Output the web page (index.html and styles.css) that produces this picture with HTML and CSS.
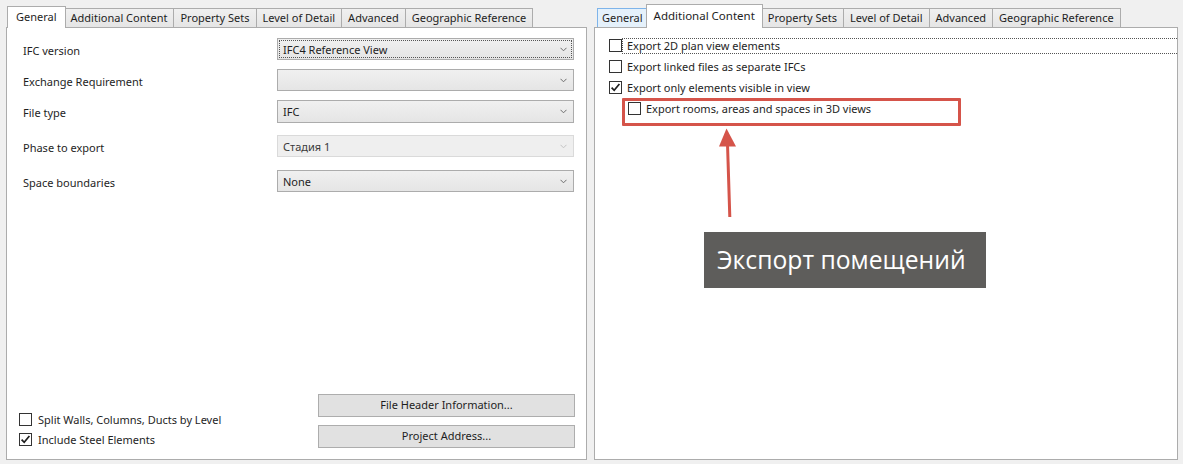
FILE: index.html
```html
<!DOCTYPE html>
<html lang="en">
<head>
    <meta charset="UTF-8">
    <title>IFC Export Setup</title>
    <link rel="stylesheet" href="styles.css">
</head>
<body>
    <!-- left dialog: General tab -->
    <section class="panel panelLeft">
        <div class="tabs">
            <div class="tab active">General</div>
            <div class="tab">Additional Content</div>
            <div class="tab">Property Sets</div>
            <div class="tab">Level of Detail</div>
            <div class="tab">Advanced</div>
            <div class="tab">Geographic Reference</div>
        </div>

        <div class="page generalPage">
            <div class="fields">
                <div class="fieldLabel">IFC version</div>
                <div class="combo focused">
                    <span>IFC4 Reference View</span>
                    <svg class="chev" width="7" height="5" viewBox="0 0 7 5"><path d="M0.5 0.8 L3.5 3.8 L6.5 0.8"/></svg>
                </div>

                <div class="fieldLabel">Exchange Requirement</div>
                <div class="combo">
                    <span></span>
                    <svg class="chev" width="7" height="5" viewBox="0 0 7 5"><path d="M0.5 0.8 L3.5 3.8 L6.5 0.8"/></svg>
                </div>

                <div class="fieldLabel">File type</div>
                <div class="combo tall">
                    <span>IFC</span>
                    <svg class="chev" width="7" height="5" viewBox="0 0 7 5"><path d="M0.5 0.8 L3.5 3.8 L6.5 0.8"/></svg>
                </div>

                <div class="fieldLabel">Phase to export</div>
                <div class="combo disabled">
                    <span>Стадия 1</span>
                    <svg class="chev" width="7" height="5" viewBox="0 0 7 5"><path d="M0.5 0.8 L3.5 3.8 L6.5 0.8"/></svg>
                </div>

                <div class="fieldLabel">Space boundaries</div>
                <div class="combo">
                    <span>None</span>
                    <svg class="chev" width="7" height="5" viewBox="0 0 7 5"><path d="M0.5 0.8 L3.5 3.8 L6.5 0.8"/></svg>
                </div>
            </div>

            <div class="bottomRow">
                <div class="checks">
                    <div class="check">
                        <span class="box"></span>
                        <span>Split Walls, Columns, Ducts by Level</span>
                    </div>
                    <div class="check">
                        <span class="box"><svg width="11" height="11" viewBox="0 0 11 11"><path d="M1.6 5.6 L4.2 8.3 L9.4 2"/></svg></span>
                        <span>Include Steel Elements</span>
                    </div>
                </div>
                <div class="buttons">
                    <div class="btn">File Header Information...</div>
                    <div class="btn">Project Address...</div>
                </div>
            </div>
        </div>
    </section>

    <!-- right dialog: Additional Content tab -->
    <section class="panel panelRight">
        <div class="tabs">
            <div class="tab hover">General</div>
            <div class="tab active">Additional Content</div>
            <div class="tab">Property Sets</div>
            <div class="tab">Level of Detail</div>
            <div class="tab">Advanced</div>
            <div class="tab">Geographic Reference</div>
        </div>

        <div class="page contentPage">
            <div class="option">
                <span class="box"></span>
                <span class="optText focusRect">Export 2D plan view elements</span>
            </div>
            <div class="option">
                <span class="box"></span>
                <span class="optText">Export linked files as separate IFCs</span>
            </div>
            <div class="option">
                <span class="box"><svg width="11" height="11" viewBox="0 0 11 11"><path d="M1.6 5.6 L4.2 8.3 L9.4 2"/></svg></span>
                <span class="optText">Export only elements visible in view</span>
            </div>
            <div class="option sub">
                <span class="box"></span>
                <span class="optText">Export rooms, areas and spaces in 3D views</span>
            </div>

            <div class="highlight"></div>
            <svg class="arrow" width="40" height="110" viewBox="0 0 40 110">
                <line x1="17.5" y1="24" x2="19.8" y2="97"/>
                <polygon points="16.5,8.5 9,26.5 26,26.5"/>
            </svg>
            <div class="callout">Экспорт помещений</div>
        </div>
    </section>
</body>
</html>
```

FILE: styles.css
```css
body{
    margin: 0;
    width: 1183px;
    height: 464px;
    background-color: #f0f0f0;
    display: flex;
    font-family: "Noto Sans", "Open Sans", sans-serif;
    font-size: 11px;
    color: #1e1e1e;
    overflow: hidden;
}
.panelLeft{
    margin-left: 6px;
    width: 581px;
}
.panelRight{
    margin-left: 7px;
    width: 584px;
}

/* tab strip */
.tabs{
    display: flex;
    align-items: flex-end;
    height: 27px;
    padding-left: 3px;
}
.tab{
    height: 19px;
    box-sizing: border-box;
    padding: 0 6px;
    line-height: 17px;
    border: 1px solid #acacac;
    border-bottom: none;
    margin-left: -1px;
    background: linear-gradient(#f0f0f0, #e5e5e5);
    white-space: nowrap;
}
.tab:first-child{
    margin-left: 0;
}
.tab.active{
    position: relative;
    z-index: 1;
    height: 22px;
    line-height: 19px;
    margin: 0 -2px -1px -2px;
    padding: 0 8px;
    background: #fff;
}
.tab.active + .tab{
    margin-left: 0;
}
.panelRight .tab.active{
    height: 24px;
    line-height: 21px;
    padding: 0 7px;
    font-size: 11.5px;
}
.tab.hover{
    padding: 0 4px;
    background: #e5f1fb;
    border-color: #7eb4ea;
    position: relative;
    z-index: 1;
}

.page{
    position: relative;
    box-sizing: border-box;
    height: 433px;
    border: 1px solid #acacac;
    background-color: #fff;
}

/* general page */
.generalPage{
    display: flex;
    flex-direction: column;
    padding: 10px 12px 10px 16px;
}
.fields{
    display: grid;
    grid-template-columns: 254px 297px;
    grid-template-rows: 31px 31px 35px 35px 22px;
}
.fieldLabel{
    height: 22px;
    display: flex;
    align-items: center;
    padding-top: 1px;
}
.combo{
    display: flex;
    align-items: center;
    justify-content: space-between;
    box-sizing: border-box;
    height: 22px;
    padding: 0 6px 0 5px;
    border: 1px solid #acacac;
    background: linear-gradient(#f0f0f0, #e5e5e5);
}
.combo.tall{
    height: 23px;
}
.combo.focused{
    outline: 1px dotted #555;
    outline-offset: -3px;
}
.combo.disabled{
    background: #efefef;
    border-color: #dadada;
    color: #3a3a3a;
}
.chev{
    flex: none;
}
.chev path{
    fill: none;
    stroke: #6d6d6d;
    stroke-width: 1;
}
.disabled .chev path{
    stroke: #c4c4c4;
}

.bottomRow{
    margin-top: auto;
    display: flex;
    justify-content: space-between;
    align-items: flex-end;
}
.checks{
    margin-left: -4px;
    margin-bottom: 3px;
    display: flex;
    flex-direction: column;
    gap: 6px;
}
.check{
    display: flex;
    align-items: center;
    gap: 6px;
    height: 14px;
}
.box{
    flex: none;
    width: 13px;
    height: 13px;
    box-sizing: border-box;
    border: 1px solid #333;
    background: #fff;
    display: flex;
    align-items: center;
    justify-content: center;
}
.box path{
    fill: none;
    stroke: #1e1e1e;
    stroke-width: 1.7;
}
.buttons{
    margin-right: -1px;
    margin-bottom: 1px;
    display: flex;
    flex-direction: column;
    gap: 8px;
}
.btn{
    width: 257px;
    height: 23px;
    box-sizing: border-box;
    border: 1px solid #adadad;
    background-color: #e1e1e1;
    text-align: center;
    line-height: 20px;
}

/* additional content page */
.contentPage{
    padding: 7px 0 0 14px;
}
.option{
    display: flex;
    align-items: center;
    height: 21px;
}
.option.sub{
    padding-left: 19px;
}
.optText{
    flex: 1;
    height: 16px;
    box-sizing: border-box;
    padding-left: 4px;
    line-height: 14px;
    border: 1px solid transparent;
}
.focusRect{
    border: 1px dotted #555;
    border-right: none;
}

.highlight{
    position: absolute;
    left: 27px;
    top: 70px;
    width: 339px;
    height: 28px;
    box-sizing: border-box;
    border: 3px solid #d5544a;
    border-radius: 1px;
}
.arrow{
    position: absolute;
    left: 115px;
    top: 92px;
}
.arrow line{
    stroke: #d5544a;
    stroke-width: 3;
}
.arrow polygon{
    fill: #d5544a;
}
.callout{
    position: absolute;
    left: 109px;
    top: 204px;
    width: 282px;
    height: 56px;
    box-sizing: border-box;
    padding-left: 13px;
    background-color: #5e5d5b;
    color: #fff;
    font-family: "Open Sans", sans-serif;
    font-size: 24.7px;
    line-height: 56px;
    white-space: nowrap;
}
```
